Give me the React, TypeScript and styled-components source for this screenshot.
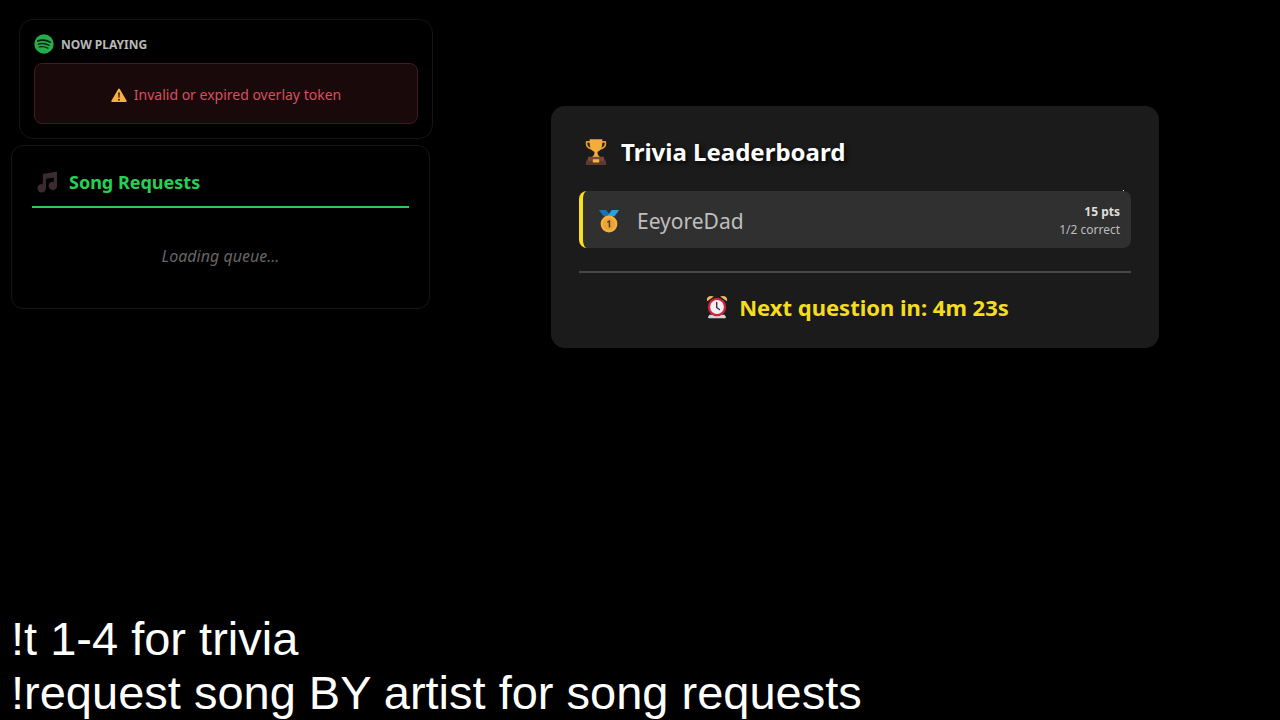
import React from "react";
import styled, { createGlobalStyle } from "styled-components";

const GlobalStyle = createGlobalStyle`
  *, *::before, *::after { box-sizing: border-box; }
  body {
    margin: 0;
    background: #000;
    color: #fff;
    font-family: "Segoe UI", "Noto Sans", "Open Sans", sans-serif;
  }
  h1, h2, p, ol { margin: 0; padding: 0; }
  svg { display: block; flex: none; }
`;

const Stage = styled.div`
  display: flex;
  flex-direction: column;
  justify-content: space-between;
  min-height: 100vh;
`;

const Overlays = styled.main`
  display: grid;
  grid-template-columns: minmax(0, 422fr) minmax(0, 608fr);
  column-gap: 118px;
  align-items: start;
  padding: 19px 121px 0 11px;
`;

const MusicColumn = styled.div`
  display: flex;
  flex-direction: column;
  gap: 6px;
`;

const NowPlayingCard = styled.section`
  margin-left: 8px;
  padding: 14px;
  border: 1px solid #0d1812;
  border-radius: 14px;
`;

const NowPlayingHeader = styled.header`
  display: flex;
  align-items: flex-start;
  gap: 7px;
  margin-bottom: 8px;
`;

const NowPlayingTitle = styled.h2`
  color: #b9b9b9;
  font-size: 12px;
  font-weight: 700;
  line-height: 21px;
`;

const ErrorBox = styled.p`
  display: flex;
  align-items: center;
  justify-content: center;
  gap: 7px;
  padding: 19px 18px 17px;
  border: 1px solid #431a20;
  border-radius: 8px;
  background: #1a090b;
  color: #d94f5f;
  font-size: 14px;
  line-height: 23px;
`;

const QueueCard = styled.section`
  margin-right: 3px;
  padding: 20px;
  border: 1px solid #141616;
  border-radius: 12px;
`;

const QueueHeader = styled.header`
  display: flex;
  align-items: center;
  gap: 11px;
  margin-bottom: 16px;
  padding: 0 4px 8px;
  border-bottom: 2px solid #2fc85b;
`;

const QueueTitle = styled.h2`
  color: #25d057;
  font-size: 18px;
  font-weight: 700;
  line-height: 32px;
`;

const QueueStatus = styled.p`
  padding: 20px 0;
  color: #666;
  font-size: 16px;
  font-style: italic;
  line-height: 24px;
  text-align: center;
`;

const LeaderboardCard = styled.section`
  margin-top: 87px;
  padding: 28px 28px 25px;
  border-radius: 14px;
  background: #1b1b1b;
`;

const LeaderboardHeader = styled.header`
  display: flex;
  align-items: center;
  gap: 14px;
  margin-bottom: 21px;
  padding-left: 6px;
`;

const LeaderboardTitle = styled.h1`
  font-size: 24px;
  font-weight: 700;
  line-height: 36px;
  text-shadow: 2px 2px 4px rgba(0, 0, 0, 0.8);
`;

const Ranking = styled.ol`
  list-style: none;
`;

const RankRow = styled.li`
  position: relative;
  display: flex;
  align-items: center;
  padding: 12px 11px 9px 15px;
  border-left: 4px solid #f7e01c;
  border-radius: 8px;
  background: #303030;

  &::after {
    content: "";
    position: absolute;
    top: -1px;
    right: 7px;
    width: 1px;
    height: 1px;
    background: #ddd;
  }
`;

const PlayerName = styled.span`
  flex: 1;
  padding-left: 17px;
  color: #bfbfbf;
  font-size: 21px;
  line-height: 32px;
`;

const Score = styled.div`
  color: #bdbdbd;
  font-size: 12px;
  line-height: 18px;
  text-align: right;
`;

const Points = styled.strong`
  display: block;
  color: #dedede;
  font-weight: 700;
`;

const Countdown = styled.p`
  display: flex;
  align-items: center;
  justify-content: center;
  gap: 11px;
  margin-top: 23px;
  padding: 18px 0 0 5px;
  border-top: 2px solid #484848;
  color: #f5dd1e;
  font-size: 22px;
  font-weight: 700;
  line-height: 32px;
`;

const Commands = styled.footer`
  padding: 0 11px;
  font-family: "Liberation Sans", Arial, sans-serif;
  font-size: 47px;
  line-height: 54px;
`;

function SpotifyLogo() {
  return (
    <svg width="20" height="20" viewBox="0 0 20 20" aria-hidden="true">
      <circle cx="10" cy="10" r="9.7" fill="#25ad4d" />
      <g fill="none" stroke="#06210e" strokeLinecap="round">
        <path d="M3.8 6.9c4.3-1.2 8.8-.8 12.5 1.3" strokeWidth="1.7" />
        <path d="M4.4 10.1c3.7-1 7.4-.6 10.7 1.2" strokeWidth="1.4" />
        <path d="M5 13c3-.7 6-.4 8.9 1.1" strokeWidth="1.2" />
      </g>
    </svg>
  );
}

function WarningIcon() {
  return (
    <svg width="16" height="16" viewBox="0 0 16 16" aria-hidden="true">
      <path d="M7.2 1.9c.4-.7 1.2-.7 1.6 0l6.8 11.9c.4.6 0 1.2-.7 1.2H1.1c-.7 0-1.1-.6-.7-1.2z" fill="#f5b13d" />
      <path d="M7.1 5.6h1.8l-.3 5.2H7.4z" fill="#3a2414" />
      <circle cx="8" cy="12.7" r="1" fill="#3a2414" />
    </svg>
  );
}

function MusicNotes() {
  return (
    <svg width="22" height="22" viewBox="0 0 22 22" aria-hidden="true">
      <path d="M6.8 2.9 21 .6v14h-3.2V6.5L10 7.7v9.5H6.8z" fill="#3b2a2f" />
      <circle cx="5.7" cy="17.3" r="4.2" fill="#3b2a2f" />
      <circle cx="16.8" cy="14.9" r="4.2" fill="#3b2a2f" />
    </svg>
  );
}

function TrophyIcon() {
  return (
    <svg width="22" height="28" viewBox="0 0 22 28" aria-hidden="true">
      <path d="M5.5 3.800H1.700c-.6 3.200 1 6.300 5.200 7.200M16.500 3.800h3.800c.6 3.200-1 6.300-5.200 7.200" fill="none" stroke="#e39a2b" strokeWidth="1.7" />
      <path d="M4.7 1.2h12.6c.4 6.700-.4 11-4.600 12.500-.6 1.800.1 3.500 2.500 5.600H6.800c2.400-2.100 3.100-3.800 2.500-5.600C5.100 12.200 4.300 7.900 4.700 1.200z" fill="#f4ad3b" />
      <path d="M3.300 18.700h15.400l1.100 4.600H2.200z" fill="#79483a" />
      <path d="M.9 22.8h20.200V27H.9z" fill="#5d3930" />
      <rect x="7.8" y="21.2" width="6.4" height="3.3" rx=".5" fill="#f6b445" />
    </svg>
  );
}

function GoldMedal() {
  return (
    <svg width="22" height="24" viewBox="0 0 22 24" aria-hidden="true">
      <path d="M.8 1h7.400l4.600 6.200H5.600z" fill="#1573b8" />
      <path d="M13.800 1h7.400l-4.600 6.200H9.200z" fill="#20a5e6" />
      <circle cx="11" cy="15" r="8.4" fill="#f6b23c" />
      <circle cx="11" cy="15" r="6" fill="#e9a535" />
      <path d="M9.300 12.600 11.300 11.300h.9v7.200h-1.500v-5.200l-1.400.7z" fill="#5b3b1c" />
    </svg>
  );
}

function AlarmClock() {
  return (
    <svg width="22" height="24" viewBox="0 0 22 24" aria-hidden="true">
      <path d="M3.500 19.800h15l1.300 2c.4.7 0 1.400-.8 1.400H3c-.8 0-1.200-.7-.8-1.400z" fill="#d4d2d2" />
      <path d="M1.100 6.200C-.2 2.700 3.200-.4 7.900 1.500zM20.900 6.200c1.300-3.500-2.100-6.600-6.800-4.700z" fill="#efb75e" />
      <circle cx="11" cy="12" r="9.200" fill="#ce2540" />
      <circle cx="11" cy="12" r="6.900" fill="#f5eff1" />
      <path d="M10.700 7.500v5l2.700 2" fill="none" stroke="#37343b" strokeWidth="1.4" strokeLinecap="round" />
    </svg>
  );
}

export default function App() {
  return (
    <>
      <GlobalStyle />
      <Stage>
        <Overlays>
          <MusicColumn>
            <NowPlayingCard>
              <NowPlayingHeader>
                <SpotifyLogo />
                <NowPlayingTitle>NOW PLAYING</NowPlayingTitle>
              </NowPlayingHeader>
              <ErrorBox role="alert">
                <WarningIcon />
                <span>Invalid or expired overlay token</span>
              </ErrorBox>
            </NowPlayingCard>
            <QueueCard>
              <QueueHeader>
                <MusicNotes />
                <QueueTitle>Song Requests</QueueTitle>
              </QueueHeader>
              <QueueStatus>Loading queue...</QueueStatus>
            </QueueCard>
          </MusicColumn>
          <LeaderboardCard>
            <LeaderboardHeader>
              <TrophyIcon />
              <LeaderboardTitle>Trivia Leaderboard</LeaderboardTitle>
            </LeaderboardHeader>
            <Ranking>
              <RankRow>
                <GoldMedal />
                <PlayerName>EeyoreDad</PlayerName>
                <Score>
                  <Points>15 pts</Points>
                  1/2 correct
                </Score>
              </RankRow>
            </Ranking>
            <Countdown>
              <AlarmClock />
              <span>Next question in: 4m 23s</span>
            </Countdown>
          </LeaderboardCard>
        </Overlays>
        <Commands>
          <p>!t 1-4 for trivia</p>
          <p>!request song BY artist for song requests</p>
        </Commands>
      </Stage>
    </>
  );
}
